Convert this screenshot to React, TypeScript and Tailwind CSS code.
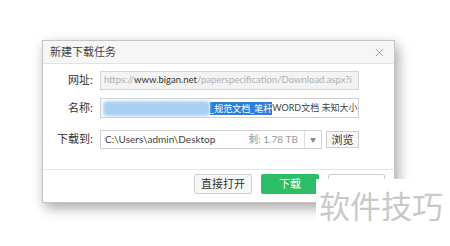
import React from "react";
import { X } from "lucide-react";

const font = { fontFamily: '"Noto Sans", "Noto Sans CJK SC", sans-serif' };
const inputFont = { fontFamily: 'Lato, "Noto Sans CJK SC", sans-serif' };

function Label({ children }: { children: React.ReactNode }) {
  return <div className="w-[50px] shrink-0 text-right text-[11px] text-[#333]">{children}</div>;
}

export default function App() {
  return (
    <div className="relative h-[246px] w-[450px] overflow-hidden bg-white pl-[42px] pt-[40px]" style={font}>
      {/* Dialog */}
      <div className="flex h-[163px] w-[353px] flex-col border border-[#c4c4c4] bg-white shadow-[3px_5px_12px_rgba(0,0,0,0.35)]">
        {/* Title */}
        <div className="flex h-[23px] shrink-0 items-center justify-between border-b border-[#e2e2e2] bg-[#f6f6f6] pl-[7px] pr-[8px]">
          <span className="text-[11px] text-[#444]">新建下载任务</span>
          <X size={13} strokeWidth={1.2} className="text-[#777]" />
        </div>

        {/* Body */}
        <div className="flex flex-1 flex-col gap-[8px] pt-[7px]">
          <div className="flex items-center gap-[7px]">
            <Label>网址:</Label>
            <div
              className="flex h-[19px] w-[259px] items-center overflow-hidden whitespace-nowrap border border-[#d4d4d4] bg-[#f3f3f3] pl-[3px] text-[9.5px] text-[#b0b0b0]"
              style={inputFont}
            >
              https://<span className="text-[#333]">www.bigan.net</span>/paperspecification/Download.aspx?i
            </div>
          </div>

          <div className="flex items-center gap-[7px]">
            <Label>名称:</Label>
            <div
              className="flex h-[20px] w-[259px] items-center overflow-hidden whitespace-nowrap border border-[#cfcfcf] bg-white pl-[2px] text-[9px] text-[#444]"
              style={inputFont}
            >
              <div className="h-[15px] w-[107px] shrink-0 rounded-[4px] bg-[#a9d0f2] blur-[1.5px]" />
              <span className="bg-[#2f7fd8] leading-[13px] text-white">_规范文档_笔杆</span>
              <span>WORD文档 未知大小</span>
            </div>
          </div>

          <div className="mt-[4px] flex items-center gap-[7px]">
            <Label>下载到:</Label>
            <div className="flex h-[19px] w-[222px] items-center border border-[#cfcfcf] bg-white text-[10px]" style={inputFont}>
              <span className="flex-1 pl-[4px] text-[#444]">C:\Users\admin\Desktop</span>
              <span className="pr-[6px] text-[#999]">剩: 1.78 TB</span>
              <div className="flex h-full w-[17px] items-center justify-center border-l border-[#e0e0e0] text-[6px] text-[#888]">▼</div>
            </div>
            <button className="ml-[-3px] h-[17px] w-[33px] border border-[#cfcfcf] bg-[#f7f7f7] text-[11px] text-[#333]">浏览</button>
          </div>
        </div>

        {/* Footer */}
        <div className="flex h-[33px] shrink-0 items-start justify-end gap-[9px] border-t border-[#e6e6e6] pr-[9px] pt-[4px]">
          <button className="h-[20px] w-[58px] rounded-[2px] border border-[#cfcfcf] bg-[#f7f7f7] text-[11px] text-[#333]">直接打开</button>
          <button className="h-[20px] w-[58px] rounded-[2px] bg-[#2dbd66] text-[11px] text-white">下载</button>
          <button className="h-[20px] w-[57px] rounded-[2px] border border-[#cfcfcf] bg-white" />
        </div>
      </div>

      {/* Watermark */}
      <div className="absolute left-[316px] top-[179px] h-[67px] w-[134px] bg-white pl-[3px] pt-[9px] text-[31px] leading-[36px] text-[#c9c9c9]">
        软件技巧
      </div>
    </div>
  );
}
